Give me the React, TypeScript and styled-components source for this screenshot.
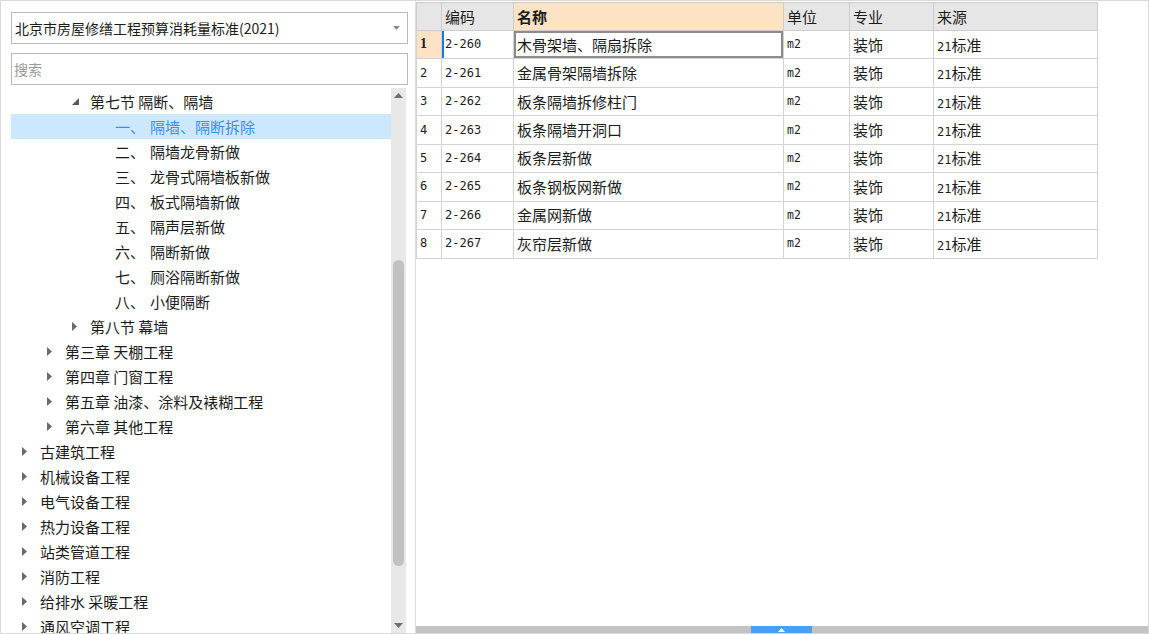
import React from "react";
import styled, { createGlobalStyle } from "styled-components";

const Global = createGlobalStyle`
  html, body { margin: 0; padding: 0; background: #fff; }
  body { font-family: "Noto Sans CJK SC", "Microsoft YaHei", sans-serif; color: #1c1c1c; }
  * { box-sizing: border-box; }
`;

const CJK = `"Noto Sans CJK SC", sans-serif`;
const MONO = `"DejaVu Sans Mono", "Noto Sans CJK SC", monospace`;

const Frame = styled.div`
  width: 1149px;
  height: 634px;
  border: 1px solid #d9d9d9;
  display: flex;
  overflow: hidden;
  background: #fff;
`;

const Sidebar = styled.aside`
  width: 415px;
  flex: none;
  display: flex;
  flex-direction: column;
  padding: 11px 0 0 10px;
  border-right: 1px solid #dedede;
`;

const Combo = styled.div`
  width: 397px;
  height: 32px;
  border: 1px solid #b9b9b9;
  display: flex;
  align-items: center;
  justify-content: space-between;
  padding: 0 7px 0 3px;
  font-family: ${CJK};
  font-size: 14px;
  line-height: 20px;
  color: #1c1c1c;
`;

const Search = styled.div`
  width: 397px;
  height: 32px;
  margin-top: 9px;
  border: 1px solid #b9b9b9;
  display: flex;
  align-items: center;
  padding-left: 2px;
  font-family: ${CJK};
  font-size: 14px;
  color: #9a9a9a;
`;

const TreeWrap = styled.div`
  margin-top: 3px;
  width: 395px;
  flex: 1;
  display: flex;
  overflow: hidden;
`;

const TreeBody = styled.div`
  flex: 1;
  padding-top: 1px;
  overflow: hidden;
`;

const Row = styled.div<{ $level: number; $selected?: boolean }>`
  height: 25px;
  display: flex;
  align-items: center;
  padding-left: ${(p) => 8 + p.$level * 25}px;
  background: ${(p) => (p.$selected ? "#cce8ff" : "transparent")};
  color: ${(p) => (p.$selected ? "#3d8ee8" : "#1c1c1c")};
  font-family: ${CJK};
  font-size: 15px;
  line-height: 20px;
  white-space: nowrap;
`;

const Toggle = styled.span`
  width: 21px;
  flex: none;
  display: flex;
  align-items: center;
  padding-left: 3px;
`;

const LeafNum = styled.span`
  width: 35px;
  flex: none;
`;

const VScroll = styled.div`
  width: 15px;
  flex: none;
  background: #e8e8e8;
  display: flex;
  flex-direction: column;
  align-items: center;
`;

const ScrollBtn = styled.div`
  height: 15px;
  width: 15px;
  display: flex;
  align-items: center;
  justify-content: center;
  flex: none;
`;

const Thumb = styled.div`
  margin-top: 157px;
  width: 11px;
  height: 306px;
  border-radius: 6px;
  background: #c1c1c1;
  flex: none;
`;

const Spacer = styled.div`
  flex: 1;
`;

const Main = styled.main`
  flex: 1;
  display: flex;
  flex-direction: column;
  min-width: 0;
`;

const TableArea = styled.div`
  flex: 1;
  padding-top: 1px;
  overflow: hidden;
`;

const Grid = styled.table`
  border-collapse: collapse;
  table-layout: fixed;
  width: 681px;
`;

const Th = styled.th<{ $active?: boolean; $w: number }>`
  width: ${(p) => p.$w}px;
  height: 28px;
  padding: 0 0 0 3px;
  text-align: left;
  background: ${(p) => (p.$active ? "#fde3c4" : "#e6e6e6")};
  border: 1px solid #cdcdcd;
  font-family: ${CJK};
  font-size: 15px;
  font-weight: ${(p) => (p.$active ? 700 : 400)};
  color: #1c1c1c;
`;

const Td = styled.td<{ $kind?: "num" | "code" | "text" | "unit"; $cur?: boolean; $focus?: boolean; $numActive?: boolean }>`
  height: 28.45px;
  padding: 0 0 1px 3px;
  border: 1px solid #d3d3d3;
  white-space: nowrap;
  overflow: hidden;
  font-family: ${(p) => (p.$kind === "text" ? CJK : MONO)};
  font-size: ${(p) => (p.$kind === "text" ? "15px" : p.$kind === "unit" ? "11.5px" : "12px")};
  color: #1c1c1c;
  background: ${(p) => (p.$numActive ? "#fde3c4" : "#fff")};
  font-weight: ${(p) => (p.$numActive ? 700 : 400)};
  ${(p) => (p.$numActive ? `font-family: "Liberation Serif", serif; font-size: 14px;` : "")}
  ${(p) => (p.$cur ? "box-shadow: inset 2px 0 0 #1c78e6;" : "")}
  ${(p) => (p.$focus ? "box-shadow: inset 0 0 0 2px #8c8c8c, inset 0 0 0 3px #fff;" : "")}
`;

const Mixed = styled.span`
  font-family: ${MONO};
  font-size: 12px;
`;

const CJKPart = styled.span`
  font-family: ${CJK};
  font-size: 15px;
`;

const HScroll = styled.div`
  height: 7px;
  flex: none;
  background: #c3c3c3;
  display: flex;
`;

const HThumb = styled.div`
  margin-left: 335px;
  width: 61px;
  height: 7px;
  background: #4a9ff5;
  display: flex;
  align-items: center;
  justify-content: center;
`;

const ExpandedIcon = () => (
  <svg width="7" height="7" viewBox="0 0 7 7">
    <polygon points="7,0 7,7 0,7" fill="#5a5a5a" />
  </svg>
);

const CollapsedIcon = () => (
  <svg width="5" height="9" viewBox="0 0 5 9">
    <polygon points="0,0 5,4.5 0,9" fill="#6a6a6a" />
  </svg>
);

const Caret = ({ up, color = "#6d6d6d", w = 9 }: { up?: boolean; color?: string; w?: number }) => (
  <svg width={w} height={w / 2 + 0.5} viewBox="0 0 9 5">
    <polygon points={up ? "0,5 4.5,0 9,5" : "0,0 9,0 4.5,5"} fill={color} />
  </svg>
);

type Node = { level: number; label: string; state?: "open" | "closed"; num?: string; selected?: boolean };

const tree: Node[] = [
  { level: 2, label: "第七节 隔断、隔墙", state: "open" },
  { level: 3, num: "一、", label: "隔墙、隔断拆除", selected: true },
  { level: 3, num: "二、", label: "隔墙龙骨新做" },
  { level: 3, num: "三、", label: "龙骨式隔墙板新做" },
  { level: 3, num: "四、", label: "板式隔墙新做" },
  { level: 3, num: "五、", label: "隔声层新做" },
  { level: 3, num: "六、", label: "隔断新做" },
  { level: 3, num: "七、", label: "厕浴隔断新做" },
  { level: 3, num: "八、", label: "小便隔断" },
  { level: 2, label: "第八节 幕墙", state: "closed" },
  { level: 1, label: "第三章 天棚工程", state: "closed" },
  { level: 1, label: "第四章 门窗工程", state: "closed" },
  { level: 1, label: "第五章 油漆、涂料及裱糊工程", state: "closed" },
  { level: 1, label: "第六章 其他工程", state: "closed" },
  { level: 0, label: "古建筑工程", state: "closed" },
  { level: 0, label: "机械设备工程", state: "closed" },
  { level: 0, label: "电气设备工程", state: "closed" },
  { level: 0, label: "热力设备工程", state: "closed" },
  { level: 0, label: "站类管道工程", state: "closed" },
  { level: 0, label: "消防工程", state: "closed" },
  { level: 0, label: "给排水 采暖工程", state: "closed" },
  { level: 0, label: "通风空调工程", state: "closed" },
];

const rows = [
  ["2-260", "木骨架墙、隔扇拆除"],
  ["2-261", "金属骨架隔墙拆除"],
  ["2-262", "板条隔墙拆修柱门"],
  ["2-263", "板条隔墙开洞口"],
  ["2-264", "板条层新做"],
  ["2-265", "板条钢板网新做"],
  ["2-266", "金属网新做"],
  ["2-267", "灰帘层新做"],
];

export default function App() {
  return (
    <>
      <Global />
      <Frame>
        <Sidebar>
          <Combo>
            <span>北京市房屋修缮工程预算消耗量标准(2021)</span>
            <Caret color="#8a8a8a" w={7} />
          </Combo>
          <Search>搜索</Search>
          <TreeWrap>
            <TreeBody>
              {tree.map((n, i) => (
                <Row key={i} $level={n.level} $selected={n.selected}>
                  <Toggle>
                    {n.state === "open" && <ExpandedIcon />}
                    {n.state === "closed" && <CollapsedIcon />}
                  </Toggle>
                  {n.num && <LeafNum>{n.num}</LeafNum>}
                  <span>{n.label}</span>
                </Row>
              ))}
            </TreeBody>
            <VScroll>
              <ScrollBtn>
                <Caret up />
              </ScrollBtn>
              <Thumb />
              <Spacer />
              <ScrollBtn>
                <Caret />
              </ScrollBtn>
            </VScroll>
          </TreeWrap>
        </Sidebar>
        <Main>
          <TableArea>
            <Grid>
              <thead>
                <tr>
                  <Th $w={25}></Th>
                  <Th $w={72}>编码</Th>
                  <Th $w={270} $active>名称</Th>
                  <Th $w={66}>单位</Th>
                  <Th $w={84}>专业</Th>
                  <Th $w={164}>来源</Th>
                </tr>
              </thead>
              <tbody>
                {rows.map(([code, name], i) => (
                  <tr key={code}>
                    <Td $kind="num" $numActive={i === 0}>{i + 1}</Td>
                    <Td $kind="code" $cur={i === 0}>{code}</Td>
                    <Td $kind="text" $focus={i === 0}>{name}</Td>
                    <Td $kind="unit">m2</Td>
                    <Td $kind="text">装饰</Td>
                    <Td $kind="text">
                      <Mixed>21</Mixed>
                      <CJKPart>标准</CJKPart>
                    </Td>
                  </tr>
                ))}
              </tbody>
            </Grid>
          </TableArea>
          <HScroll>
            <HThumb>
              <svg width="7" height="4" viewBox="0 0 7 4">
                <polygon points="0,4 3.5,0 7,4" fill="#fff" />
              </svg>
            </HThumb>
          </HScroll>
        </Main>
      </Frame>
    </>
  );
}
